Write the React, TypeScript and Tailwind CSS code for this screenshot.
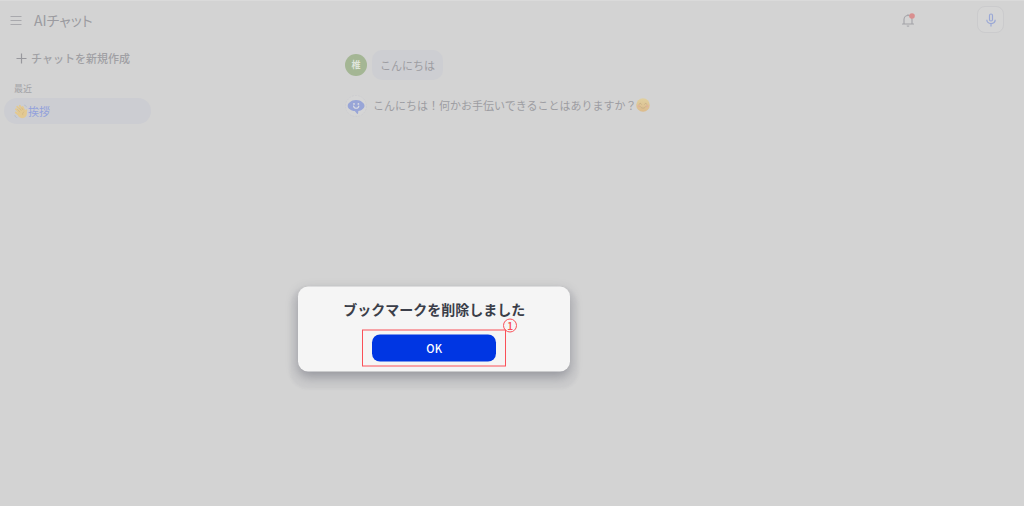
import type { ReactNode } from 'react';

const CHATS = [{ id: 'greeting', title: '挨拶' }];

function WaveEmoji() {
  return (
    <svg viewBox="0 0 14 15" className="h-[15px] w-3.5 shrink-0" role="img" aria-label="手を振る">
      <g stroke="#e3c991" strokeLinecap="round" strokeWidth="1.9">
        <path d="M2 5.2 6 9.500M3.200 2.700 7 7.500M5.800 1.800 9 7M8.600 3 10.500 7M12.300 6.200 11.600 9M1.800 8.400 5 11" />
      </g>
      <path d="M4 8.200 8.500 5.500 12.600 8c.8 2.600-.2 4.800-2.400 5.800-2.200.9-4.600.2-6-1.800z" fill="#e3c991" />
      <path d="M3.300 5.200 6 8.200M5.200 3.700 7.500 6.800M7.600 3.700 9.200 6.200M10.300 7.600c-1.500.8-1.900 2-1.500 3.500" fill="none" stroke="#cfb180" strokeWidth=".6" />
      <path d="M.8 11.200c.4 1.400 1.200 2.200 2.400 2.500M10.200 1.100c1.200.2 2 .9 2.400 2.100" fill="none" stroke="#b3bccb" strokeWidth=".9" />
    </svg>
  );
}

function SmileEmoji() {
  return (
    <svg viewBox="0 0 14 14" className="size-3.5 shrink-0" role="img" aria-label="笑顔">
      <defs>
        <linearGradient id="smile" x1="0" y1="0" x2="0" y2="1">
          <stop offset="0" stopColor="#e0d0a0" />
          <stop offset="1" stopColor="#dcbb8c" />
        </linearGradient>
      </defs>
      <circle cx="7" cy="7" r="6.800" fill="url(#smile)" />
      <circle cx="2.800" cy="8.200" r="1.300" fill="#dfb69a" />
      <circle cx="11.200" cy="8.200" r="1.300" fill="#dfb69a" />
      <path
        d="M3.200 6.200c.5-1.200 1.700-1.200 2.200 0M8.600 6.200c.5-1.200 1.700-1.200 2.200 0M4.400 8.800c1.300 1.900 3.900 1.900 5.200 0"
        fill="none"
        stroke="#bfa883"
        strokeWidth=".7"
        strokeLinecap="round"
      />
    </svg>
  );
}

function BotIcon() {
  return (
    <svg viewBox="0 0 22 22" className="size-[22px] shrink-0" aria-hidden="true">
      <circle cx="11" cy="11" r="10.500" fill="#d5d5d5" stroke="#cacace" strokeWidth=".6" strokeDasharray="2 1" />
      <path
        d="M11 5c2.800 0 4.900.8 6.300 2.300 1.300.9 2.200 2 2.200 3.500s-.8 2.500-2.100 3.400c-1 1-2.500 1.500-4.100 1.700l-.2 2.300c0 .8-.8 1-1.300.4l-2-2.500c-2-.1-3.700-.8-5-1.900-1.300-.8-2.100-1.900-2.100-3.300 0-1.500.9-2.700 2.200-3.600C6.400 5.800 8.400 5 11 5z"
        fill="#98a5d7"
      />
      <circle cx="9" cy="8.900" r=".9" fill="#dcdde3" />
      <circle cx="13.400" cy="8.900" r=".9" fill="#dcdde3" />
      <path d="M8.600 11c.2 3 5 3 5.200 0" fill="none" stroke="#dcdde3" strokeWidth="1.200" strokeLinecap="round" />
    </svg>
  );
}

function Header() {
  return (
    <header className="flex h-10 items-center border-t border-[#dadada] pr-5 pb-0.5 pl-2.5">
      <button type="button" aria-label="メニュー" className="mr-3">
        <svg viewBox="0 0 12 10" className="h-2.5 w-3" stroke="#a9a9ad" strokeWidth="1">
          <path d="M.5 1.500h11M.5 5.500h11M.5 9.500h11" />
        </svg>
      </button>
      <h1 className="text-sm leading-5 text-[#9b9ba0] [font-feature-settings:'palt']">AIチャット</h1>
      <button type="button" aria-label="通知" className="mr-[62px] ml-auto">
        <svg viewBox="0 0 14 16" className="h-4 w-3.5" fill="none">
          <path
            d="M1.500 12h11M3 12V7.500a4 4 0 0 1 8 0V12M7 3.500V2.500"
            stroke="#a3a3a8"
            strokeWidth="1.100"
            strokeLinecap="round"
          />
          <path d="M5.600 13.500h2.800a1.400 1.200 0 0 1-2.800 0z" fill="#a9a9ad" />
          <circle cx="11" cy="4" r="2.800" fill="#d98f8f" />
        </svg>
      </button>
      <button
        type="button"
        aria-label="音声入力"
        className="flex size-[27px] items-center justify-center rounded-lg border border-[#cbcbcd] bg-[#d5d5d5]"
      >
        <svg viewBox="0 0 10 14" className="h-3.5 w-2.5" fill="none" stroke="#9aa8d6" strokeWidth="1.200">
          <rect x="3.500" y="1" width="3" height="7" rx="1.500" />
          <path d="M.8 6.800c0 5 8.400 5 8.400 0M5 10.600v2.900" />
        </svg>
      </button>
    </header>
  );
}

function Sidebar() {
  return (
    <nav aria-label="チャット履歴" className="w-[156px] shrink-0 pt-2 pr-[5px] pl-1">
      <button type="button" className="flex items-center gap-1 pl-3 text-[11px] leading-5 font-medium text-[#a0a0a4]">
        <svg viewBox="0 0 11 11" className="size-[11px]" stroke="#98989d" strokeWidth="1.200">
          <path d="M5.500.5v10M.5 5.500h10" />
        </svg>
        チャットを新規作成
      </button>
      <h2 className="mt-3 pl-2.5 text-[9px] leading-[18px] text-[#a3a3a7]">最近</h2>
      {CHATS.map((chat) => (
        <a
          key={chat.id}
          href={`#${chat.id}`}
          aria-current="page"
          className="flex h-[26px] items-center rounded-full bg-[#cccdd2] pl-2.5 text-[11px] text-[#92a1dc]"
        >
          <WaveEmoji />
          {chat.title}
        </a>
      ))}
    </nav>
  );
}

function Message({ avatar, children }: { avatar: ReactNode; children: ReactNode }) {
  return (
    <div className="flex items-center gap-[5px] text-[11px] leading-5 text-[#9d9da2]">
      {avatar}
      {children}
    </div>
  );
}

function Conversation() {
  return (
    <main className="flex flex-1 flex-col gap-[15px] pt-2.5 pl-[189px]">
      <Message
        avatar={
          <span className="flex size-[22px] items-center justify-center rounded-full bg-[#a4b694] text-[9px] font-bold text-[#dfe4da]">
            椎
          </span>
        }
      >
        <p className="rounded-[10px] bg-[#cdced2] px-2 py-[5px]">こんにちは</p>
      </Message>
      <Message avatar={<BotIcon />}>
        <p className="flex items-center pb-0.5 pl-px">
          こんにちは！何かお手伝いできることはありますか？
          <SmileEmoji />
        </p>
      </Message>
    </main>
  );
}

function Dialog() {
  return (
    <div
      role="dialog"
      aria-labelledby="dialog-title"
      className="absolute top-[65%] left-[42.4%] flex w-68 -translate-x-1/2 -translate-y-1/2 flex-col items-center rounded-[10px] bg-[#f5f5f5] pt-[11px] pb-[5px] shadow-[0_5px_12px_rgba(60,62,78,0.38),0_9px_3px_8px_rgba(90,92,110,0.05)]"
    >
      <h2 id="dialog-title" className="text-sm leading-[22px] font-bold text-[#3b3e49]">
        ブックマークを削除しました
      </h2>
      <div className="relative mt-2.5 border border-[#fa5058] px-[9px] py-1">
        <button
          type="button"
          className="block h-[27px] w-[124px] rounded-lg bg-[#0036e3] text-[11px] font-medium text-white"
        >
          OK
        </button>
        <span className="absolute -top-3 -right-3 flex size-3.5 items-center justify-center rounded-full border border-[#fa5058] text-[11px] leading-none font-medium text-[#fa5058]">
          1
        </span>
      </div>
    </div>
  );
}

export default function App() {
  return (
    <div className="relative flex min-h-screen flex-col overflow-hidden bg-[#d3d3d3] font-['Noto_Sans_CJK_JP',sans-serif]">
      <Header />
      <div className="flex flex-1">
        <Sidebar />
        <Conversation />
      </div>
      <Dialog />
    </div>
  );
}
